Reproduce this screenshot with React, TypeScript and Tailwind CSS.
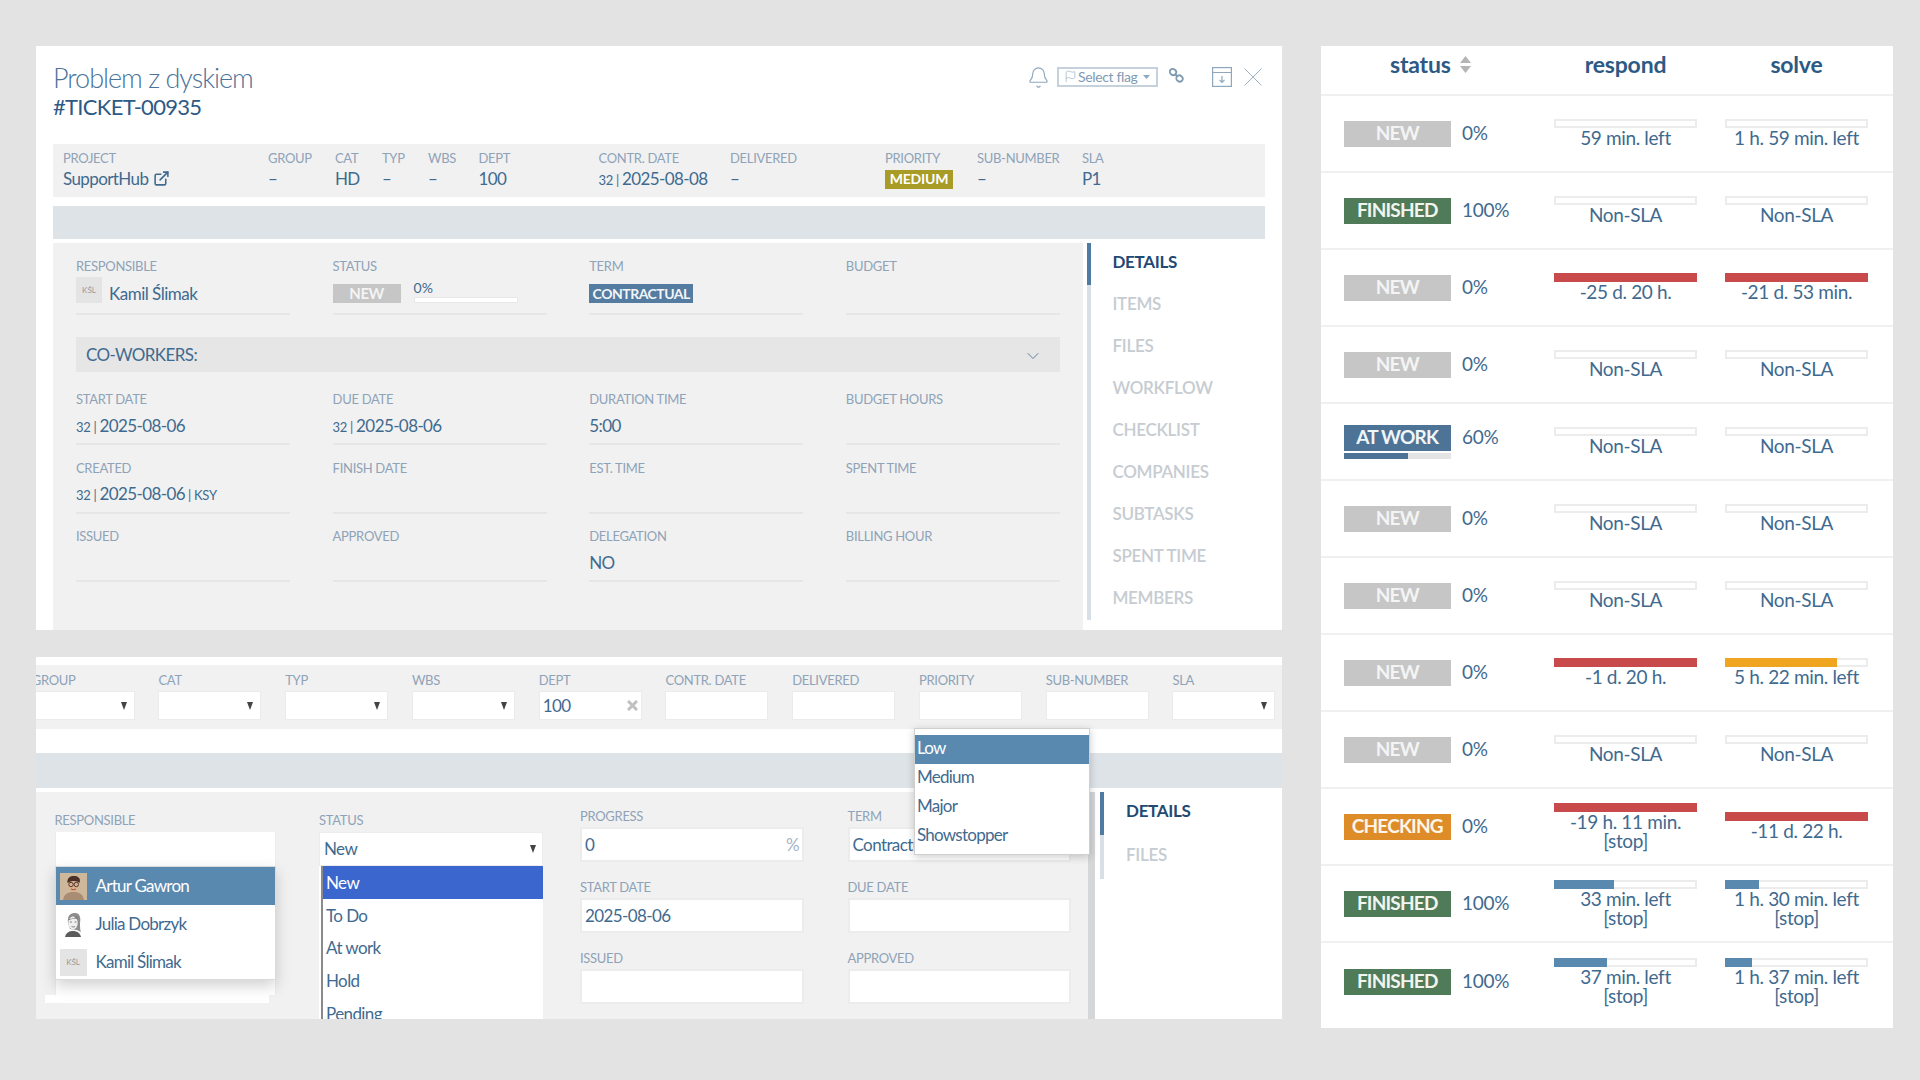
import React from "react";
import { Bell, Flag, X, ChevronDown, ExternalLink } from "lucide-react";

const Label = ({ children, cls = "" }: { children: React.ReactNode; cls?: string }) => (
  <div className={"h-4 leading-4 text-[13px] text-[#8fa3b8] tracking-[-0.3px] uppercase whitespace-nowrap " + cls}>{children}</div>
);

const Meta = ({ w, label, children }: { w: string; label: string; children?: React.ReactNode }) => (
  <div className={w}>
    <Label>{label}</Label>
    <div className="mt-[3px] h-5 leading-5 text-[17px] tracking-[-0.6px] text-[#3f6a8f] whitespace-nowrap flex items-center">{children}</div>
  </div>
);

const Wk = ({ d, extra }: { d: string; extra?: boolean }) => (
  <span className="whitespace-nowrap">
    <span className="text-[13px] tracking-[-0.3px]">32 | </span>
    {d}
    {extra && <span className="text-[13px] tracking-[-0.3px]"> | KSY</span>}
  </span>
);

const Field = ({ label, children }: { label: string; children?: React.ReactNode }) => (
  <div className="h-[54px] flex flex-col">
    <Label>{label}</Label>
    <div className="flex-1 flex items-center pt-[1px] border-b-2 border-[#e4e6e8] text-[17px] tracking-[-0.6px] text-[#3f6a8f]">{children}</div>
  </div>
);

const Kav = ({ cls = "" }: { cls?: string }) => (
  <div className={"w-[26px] h-[26px] bg-[#e4e4e4] flex items-center justify-center text-[8px] text-[#999] shrink-0 " + cls}>KŚL</div>
);

const SideLine = ({ h, active }: { h: string; active: string }) => (
  <div className={"w-1 shrink-0 bg-[#d8dfe6] " + h}>
    <div className={"w-full bg-[#4f7ba3] " + active} />
  </div>
);

const tabs = ["DETAILS", "ITEMS", "FILES", "WORKFLOW", "CHECKLIST", "COMPANIES", "SUBTASKS", "SPENT TIME", "MEMBERS"];

const Tri = ({ cls = "" }: { cls?: string }) => (
  <svg width="6" height="8" viewBox="0 0 6 8" className={"fill-[#444] " + cls}>
    <path d="M0 0 H6 L3 8 Z" />
  </svg>
);

const TopField = ({ label, arrow, value, clear }: { label: string; arrow?: boolean; value?: string; clear?: boolean }) => (
  <div className="w-[103px] shrink-0">
    <Label>{label}</Label>
    <div className="mt-[3px] h-[29px] bg-white border border-[#ebebeb] flex items-center justify-between pl-[3px] pr-[7px] text-[17px] tracking-[-0.6px] text-[#3f6a8f]">
      <span>{value}</span>
      {arrow && <Tri />}
      {clear && (
        <svg width="11" height="11" viewBox="0 0 11 11" className="-mr-[4px]" fill="none" stroke="#c0c0c0" strokeWidth="3">
          <path d="M1 1L10 10M10 1L1 10" />
        </svg>
      )}
    </div>
  </div>
);

const BoxField = ({ label, value, right }: { label: string; value?: string; right?: string }) => (
  <div>
    <Label>{label}</Label>
    <div className="mt-[3px] h-[35px] bg-white border-2 border-[#ececec] flex items-center justify-between pl-[3px] pr-[3px] text-[17px] tracking-[-0.6px] text-[#3f6a8f] overflow-hidden whitespace-nowrap">
      <span>{value}</span>
      {right && <span className="text-[#a5b5c4]">{right}</span>}
    </div>
  </div>
);

const ArturAvatar = () => (
  <svg width="27" height="27" viewBox="0 0 27 27" className="shrink-0">
    <rect width="27" height="27" fill="#cdb89c" />
    <path d="M3 27 C4 20 9 19 13.500 19 C18 19 23 20 24 27 Z" fill="#a98d73" />
    <ellipse cx="13.500" cy="12" rx="5.500" ry="7" fill="#dcae8d" />
    <path d="M7.500 10 C6.500 3.500 12 2.500 15 3 C20 3.500 20.500 7 19.500 10 C17 7.500 12 7 7.500 10 Z" fill="#4a3026" />
    <circle cx="11" cy="11.500" r="2.200" fill="none" stroke="#2c2320" strokeWidth="0.8" />
    <circle cx="16.300" cy="11.500" r="2.200" fill="none" stroke="#2c2320" strokeWidth="0.8" />
    <path d="M11 16 Q13.500 17.500 16 16" fill="none" stroke="#7a3f30" strokeWidth="0.8" />
  </svg>
);

const JuliaAvatar = () => (
  <svg width="27" height="27" viewBox="0 0 27 27" className="shrink-0">
    <rect width="27" height="27" fill="#fff" />
    <path d="M5 26 C6 21 10 20 13 20 C17 20 20 22 21 26 Z" fill="#5c5c5c" />
    <path d="M8 12 C7 4 11 2 15 2 C20 2 21 7 20 12 C20 16 20 19 21 21 L17 19 L10 18 Z" fill="#8d8d8d" />
    <ellipse cx="13" cy="12" rx="4.700" ry="6.500" fill="#efefef" />
    <path d="M9 8 C12 8 15 7 17 5 L18 9 C17 6 12 8 9 9 Z" fill="#777" />
    <path d="M10 11 h2 M14.500 11 h2 M11.500 15.500 q2 1 3.500 0" stroke="#555" strokeWidth="0.7" fill="none" />
  </svg>
);

const Badge = ({ text }: { text: string }) => {
  const bg =
    text === "NEW" ? "bg-[#c6c6c6] text-[#f4f4f4]" : text === "FINISHED" ? "bg-[#507b59] text-[#f0f5f0]" : text === "AT WORK" ? "bg-[#4d7397] text-[#f0f5f8]" : "bg-[#de8c28] text-[#fdf5e8]";
  return <div className={"w-[107.5px] h-[26px] flex items-center justify-center text-[19px] font-bold tracking-[-0.8px] " + bg}>{text}</div>;
};

type Sla = { t: string; stop?: boolean; c?: string; p?: number };

const SlaCell = ({ s, cls }: { s: Sla; cls: string }) => (
  <div className={"w-[143px] shrink-0 text-center text-[19px] tracking-[-0.35px] leading-[19.5px] text-[#3f6a8f] " + cls}>
    <div className="h-[9px] bg-white border-2 border-[#ececec] relative">
      {s.c && <div className="absolute -left-[2px] -top-[2px] h-[9px]" style={{ width: `${((s.p ?? 0) * 143) / 139}%`, background: s.c }} />}
    </div>
    <div>{s.t}</div>
    {s.stop && <div>[stop]</div>}
  </div>
);

const red = "#c94a4a";
const blue = "#5a89b0";
const ns: Sla = { t: "Non-SLA" };
const rows: { st: string; pct: string; a: Sla; b: Sla }[] = [
  { st: "NEW", pct: "0%", a: { t: "59 min. left" }, b: { t: "1 h. 59 min. left" } },
  { st: "FINISHED", pct: "100%", a: ns, b: ns },
  { st: "NEW", pct: "0%", a: { t: "-25 d. 20 h.", c: red, p: 100 }, b: { t: "-21 d. 53 min.", c: red, p: 100 } },
  { st: "NEW", pct: "0%", a: ns, b: ns },
  { st: "AT WORK", pct: "60%", a: ns, b: ns },
  { st: "NEW", pct: "0%", a: ns, b: ns },
  { st: "NEW", pct: "0%", a: ns, b: ns },
  { st: "NEW", pct: "0%", a: { t: "-1 d. 20 h.", c: red, p: 100 }, b: { t: "5 h. 22 min. left", c: "#f0a521", p: 78 } },
  { st: "NEW", pct: "0%", a: ns, b: ns },
  { st: "CHECKING", pct: "0%", a: { t: "-19 h. 11 min.", stop: true, c: red, p: 100 }, b: { t: "-11 d. 22 h.", c: red, p: 100 } },
  { st: "FINISHED", pct: "100%", a: { t: "33 min. left", stop: true, c: blue, p: 42 }, b: { t: "1 h. 30 min. left", stop: true, c: blue, p: 24 } },
  { st: "FINISHED", pct: "100%", a: { t: "37 min. left", stop: true, c: blue, p: 37 }, b: { t: "1 h. 37 min. left", stop: true, c: blue, p: 19 } },
];

export default function App() {
  return (
    <div className="w-[1920px] h-[1080px] bg-[#e3e3e3] flex items-start pl-[36px] pt-[46px] gap-[39px] overflow-hidden [font-family:Lato,sans-serif]">
      <div className="w-[1246px] shrink-0 flex flex-col gap-[27px]">
        {/* card 1 */}
        <div className="h-[584px] bg-white flex flex-col">
          <div className="h-[98px] flex justify-between pl-[17px] pr-[20px] shrink-0">
            <div className="pt-[16px]">
              <div className="text-[27px] leading-[32px] font-light tracking-[-1px] text-[#4a7399] whitespace-nowrap">Problem z dyskiem</div>
              <div className="text-[22px] leading-[26px] tracking-[-0.7px] text-[#2c5a85] whitespace-nowrap">#TICKET-00935</div>
            </div>
            <div className="pt-[21px] flex items-start text-[#8ea7bd]">
              <Bell size={23} strokeWidth={1.2} className="-mt-[1px]" />
              <div className="ml-[7px] w-[101px] h-[20px] border-2 border-[#c5d2de] flex items-center pl-[5px] pb-[1px] text-[14px] tracking-[-0.35px] text-[#7f9bb3]">
                <Flag size={13} strokeWidth={1} className="shrink-0" />
                <span className="ml-[1px] whitespace-nowrap">Select flag</span>
                <svg width="7" height="4" viewBox="0 0 7 4" className="ml-[5px] fill-[#8ea7bd]"><path d="M0 0H7L3.500 4Z" /></svg>
              </div>
              <svg width="17" height="17" viewBox="0 0 17 17" className="ml-[10px]" fill="none" stroke="#7f9bb3" strokeWidth="1.800">
                <ellipse cx="5" cy="5" rx="3.300" ry="3" transform="rotate(40 5 5)" />
                <ellipse cx="11.500" cy="11.500" rx="3.300" ry="3" transform="rotate(40 11.500 11.500)" />
                <path d="M7 7 L9.500 9.500" />
              </svg>
              <svg width="20" height="20" viewBox="0 0 20 20" className="ml-[27px]" fill="none" stroke="#8ea7bd" strokeWidth="1.200">
                <rect x="0.600" y="0.600" width="18.800" height="18.800" />
                <path d="M0.600 5.500H19.400M10 9V15M7.500 12.800L10 15.300L12.500 12.800" />
              </svg>
              <svg width="18" height="18" viewBox="0 0 18 18" className="ml-[12px] mt-[1px]" fill="none" stroke="#9db2c4" strokeWidth="1">
                <path d="M0.500 0.500L17.500 17.500M17.500 0.500L0.500 17.500" />
              </svg>
            </div>
          </div>
          <div className="mx-[16.600px] w-[1212.400px] h-[53px] bg-[#f1f1f1] flex pl-[10.400px] pt-[6px] shrink-0">
            <Meta w="w-[205px]" label="Project">
              SupportHub <ExternalLink size={17} strokeWidth={2.2} className="ml-[5px] -mt-[2px]" />
            </Meta>
            <Meta w="w-[67px]" label="Group">–</Meta>
            <Meta w="w-[47px]" label="Cat">HD</Meta>
            <Meta w="w-[46px]" label="Typ">–</Meta>
            <Meta w="w-[50.500px]" label="Wbs">–</Meta>
            <Meta w="w-[120px]" label="Dept">100</Meta>
            <Meta w="w-[131.500px]" label="Contr. Date"><Wk d="2025-08-08" /></Meta>
            <Meta w="w-[155px]" label="Delivered">–</Meta>
            <Meta w="w-[92px]" label="Priority">
              <span className="w-[68px] h-[19px] bg-[#a89b26] text-white text-[14px] font-bold tracking-[-0.2px] flex items-center justify-center">MEDIUM</span>
            </Meta>
            <Meta w="w-[105px]" label="Sub-number">–</Meta>
            <Meta w="w-[100px]" label="SLA">P1</Meta>
          </div>
          <div className="mx-[16.600px] w-[1212.400px] mt-[9px] h-[33px] bg-[#dee3e7] shrink-0" />
          <div className="flex flex-1 pl-[16.600px] mt-[4px]">
            <div className="w-[1030.400px] bg-[#f1f1f1] pl-[23.400px] pt-[15px]">
              <div className="w-[984px] grid grid-cols-4 gap-x-[42.500px]">
                <div className="h-[57px] flex flex-col">
                  <Label>Responsible</Label>
                  <div className="flex-1 flex items-start gap-[7px] border-b-2 border-[#e4e6e8] text-[17px] tracking-[-0.5px] text-[#3f6a8f]">
                    <Kav cls="mt-[3px] tracking-normal" />
                    <span className="mt-[7px]">Kamil Ślimak</span>
                  </div>
                </div>
                <div className="h-[57px] flex flex-col">
                  <Label>Status</Label>
                  <div className="flex-1 flex items-start border-b-2 border-[#e4e6e8]">
                    <div className="mt-[10px] w-[68px] h-[19px] bg-[#c6c6c6] text-[#f4f4f4] text-[15px] font-bold tracking-[-0.4px] flex items-center justify-center">NEW</div>
                    <div className="ml-[13px] w-[104px] text-[14px] leading-[14px] text-[#3f6a8f] mt-[7px]">
                      0%
                      <div className="mt-[2px] h-[6px] bg-white border border-[#e8e8e8]" />
                    </div>
                  </div>
                </div>
                <div className="h-[57px] flex flex-col">
                  <Label>Term</Label>
                  <div className="flex-1 flex items-start border-b-2 border-[#e4e6e8]">
                    <div className="mt-[10px] w-[104px] h-[19px] bg-[#547ba0] text-[#f2f5f8] text-[14px] font-bold tracking-[-0.5px] flex items-center justify-center">CONTRACTUAL</div>
                  </div>
                </div>
                <div className="h-[57px] flex flex-col">
                  <Label>Budget</Label>
                  <div className="flex-1 border-b-2 border-[#e4e6e8]" />
                </div>
              </div>
              <div className="w-[984px] mt-[22px] h-[35px] bg-[#e6e6e6] flex items-center justify-between pl-[10px] pr-[17px] text-[17px] tracking-[-0.6px] text-[#3f6a8f]">
                CO-WORKERS:
                <ChevronDown size={20} strokeWidth={1.2} className="text-[#5f7f9c] mt-[2px]" />
              </div>
              <div className="w-[984px] mt-[19px] grid grid-cols-4 gap-x-[42.500px] gap-y-[14.500px]">
                <Field label="Start date"><Wk d="2025-08-06" /></Field>
                <Field label="Due date"><Wk d="2025-08-06" /></Field>
                <Field label="Duration time">5:00</Field>
                <Field label="Budget hours" />
                <Field label="Created"><Wk d="2025-08-06" extra /></Field>
                <Field label="Finish date" />
                <Field label="Est. time" />
                <Field label="Spent time" />
                <Field label="Issued" />
                <Field label="Approved" />
                <Field label="Delegation">NO</Field>
                <Field label="Billing hour" />
              </div>
            </div>
            <div className="flex flex-1 pl-[4px]">
              <SideLine h="h-[377px]" active="h-[42px]" />
              <div className="ml-[21.500px] flex flex-col">
                {tabs.map((t, i) => (
                  <div key={t} className={"h-[42px] flex items-center -mt-[2px] mb-[2px] text-[17px] whitespace-nowrap tracking-[-0.3px] " + (i === 0 ? "font-bold text-[#1f4a73]" : "font-semibold text-[#c6ccd1]")}>
                    {t}
                  </div>
                ))}
              </div>
            </div>
          </div>
        </div>

        {/* card 2 */}
        <div className="relative h-[362px] bg-white flex flex-col overflow-hidden">
          <div className="mt-[8px] h-[64px] bg-[#f1f1f1] pt-[7px] flex gap-x-[23.750px] -ml-[4.300px] shrink-0 w-[1250.300px] pl-0">
            <TopField label="Group" arrow />
            <TopField label="Cat" arrow />
            <TopField label="Typ" arrow />
            <TopField label="Wbs" arrow />
            <TopField label="Dept" value="100" clear />
            <TopField label="Contr. Date" />
            <TopField label="Delivered" />
            <TopField label="Priority" />
            <TopField label="Sub-number" />
            <TopField label="SLA" arrow />
          </div>
          <div className="mt-[24px] h-[35px] bg-[#dee3e7] shrink-0" />
          <div className="flex flex-1 min-h-0">
            <div className="mt-[4px] w-[1052px] bg-[#f1f1f1] pl-[18.500px] flex items-start">
              <div className="w-[221.500px] pt-[20px] relative">
                <Label>Responsible</Label>
                <div className="mt-[4px] h-[163px] bg-white border-x border-[#ececec]" />
                <div className="-ml-[9.500px] w-[223.500px] h-[8px] bg-white" />
                <div className="absolute left-0 top-[74px] w-[221.500px] h-[114px] bg-white border border-[#dadada] shadow-[0_6px_14px_rgba(0,0,0,0.18)] text-[17px] tracking-[-0.75px]">
                  <div className="h-[38px] bg-[#5a89b0] flex items-center pl-[4px] gap-[9px] text-white"><ArturAvatar />Artur Gawron</div>
                  <div className="h-[38px] flex items-center pl-[4px] gap-[9px] text-[#3f6a8f]"><JuliaAvatar />Julia Dobrzyk</div>
                  <div className="h-[38px] flex items-center pl-[4px] gap-[9px] text-[#3f6a8f]"><Kav cls="w-[27px] h-[27px] tracking-normal" />Kamil Ślimak</div>
                </div>
              </div>
              <div className="ml-[43px] w-[223.500px] pt-[20px]">
                <Label>Status</Label>
                <div className="mt-[4px] h-[34px] bg-white border border-[#ececec] flex items-center justify-between pl-[4px] pr-[6px] text-[17px] tracking-[-0.6px] text-[#3f6a8f]">
                  New <Tri />
                </div>
                <div className="bg-white pl-[2px] h-[200px]">
                  <div className="border-l-2 border-[#8a8a8a] text-[17px] tracking-[-0.6px] text-[#3f6a8f]">
                    <div className="h-[33px] bg-[#3b66cd] text-white flex items-center pl-[3px]">New</div>
                    {["To Do", "At work", "Hold", "Pending"].map((t) => (
                      <div key={t} className="h-[32.700px] flex items-center pl-[3px]">{t}</div>
                    ))}
                  </div>
                </div>
              </div>
              <div className="ml-[37.500px] w-[224px] pt-[16px] flex flex-col gap-[17px]">
                <BoxField label="Progress" value="0" right="%" />
                <BoxField label="Start date" value="2025-08-06" />
                <BoxField label="Issued" />
              </div>
              <div className="ml-[43.500px] w-[223.500px] pt-[16px] flex flex-col gap-[17px]">
                <BoxField label="Term" value="Contractual" />
                <BoxField label="Due date" />
                <BoxField label="Approved" />
              </div>
            </div>
            <div className="w-[7px] bg-[#d5d6d7] mt-[4px]" />
            <div className="flex-1 flex pl-[5px] pt-[4px]">
              <SideLine h="h-[87px]" active="h-[43px]" />
              <div className="ml-[22px] flex flex-col">
                <div className="h-[38px] flex items-center text-[17px] font-bold text-[#1f4a73] tracking-[-0.3px]">DETAILS</div>
                <div className="h-[44px] mt-[3px] flex items-center text-[17px] font-semibold text-[#c6ccd1] tracking-[-0.3px]">FILES</div>
              </div>
            </div>
          </div>
          <div className="absolute left-[878px] top-[71px] w-[176px] h-[127px] bg-white border border-[#d0d0d0] shadow-[0_2px_8px_rgba(0,0,0,0.2)] pt-[6px] text-[17px] tracking-[-0.75px] text-[#3f6a8f]">
            <div className="h-[29px] bg-[#5a89b0] text-white flex items-center pl-[2px] pb-[3px]">Low</div>
            <div className="h-[29px] flex items-center pl-[2px] pb-[3px]">Medium</div>
            <div className="h-[29px] flex items-center pl-[2px] pb-[3px]">Major</div>
            <div className="h-[29px] flex items-center pl-[2px] pb-[3px]">Showstopper</div>
          </div>
        </div>
      </div>

      {/* table */}
      <div className="w-[571.500px] h-[982px] bg-white shrink-0">
        <div className="h-[50px] flex items-center border-b-2 border-[#f0f0f0] pb-[12px] text-[23px] tracking-[-0.2px] font-bold text-[#2c5a85]">
          <div className="w-[233px] pl-[69px] flex items-center gap-[9px]">
            status
            <svg width="11" height="17" viewBox="0 0 11 17" className="fill-[#b5b5b5]"><path d="M5.500 0L11 7H0Z M0 10H11L5.500 17Z" /></svg>
          </div>
          <div className="w-[143px] text-center">respond</div>
          <div className="w-[143px] ml-[28px] text-center">solve</div>
        </div>
        {rows.map((r, i) => (
          <div key={i} className={"h-[77px] flex items-center " + (i < 11 ? "border-b-2 border-[#f0f0f0]" : "")}>
            <div className="w-[233px] pl-[22.500px] flex items-start shrink-0">
              <div className="flex flex-col gap-[2px]">
                <Badge text={r.st} />
                {r.st === "AT WORK" && (
                  <div className="w-[107.500px] h-[6px] bg-[#e4e4e4]">
                    <div className="h-full w-[60%] bg-[#4d7397]" />
                  </div>
                )}
              </div>
              <div className="ml-[11px] h-[26px] leading-[24px] text-[19px] tracking-[-0.3px] text-[#3f6a8f]">{r.pct}</div>
            </div>
            <SlaCell s={r.a} cls="" />
            <SlaCell s={r.b} cls="ml-[28px]" />
          </div>
        ))}
      </div>
    </div>
  );
}
